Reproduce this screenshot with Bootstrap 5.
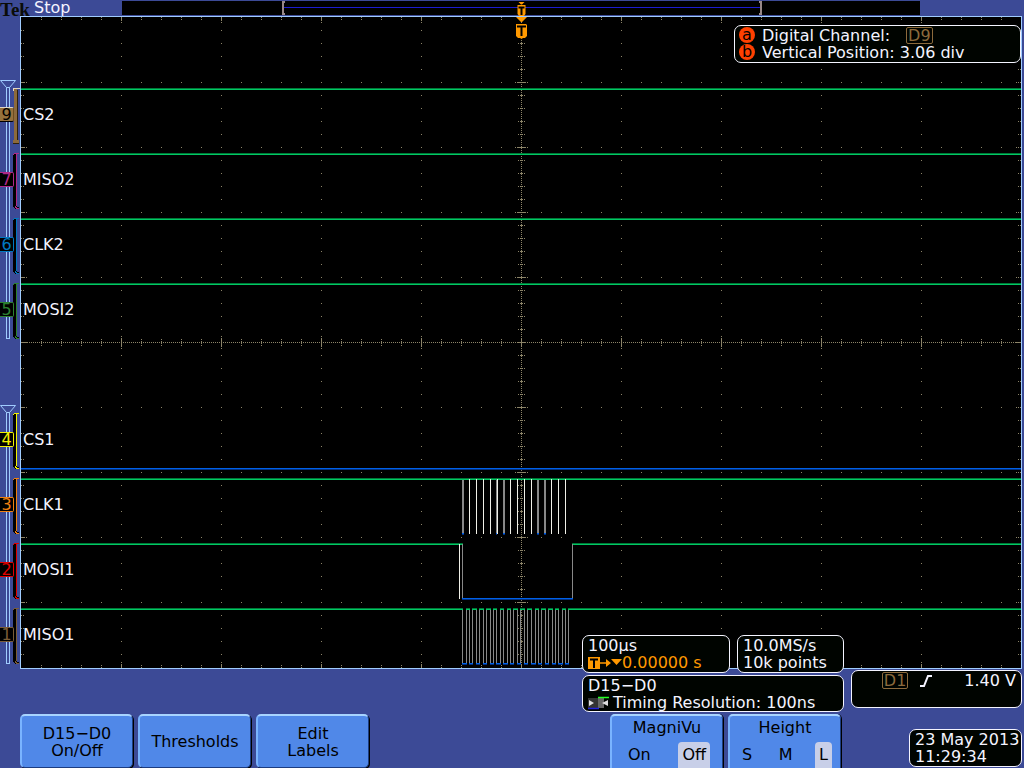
<!DOCTYPE html>
<html lang="en">
<head>
<meta charset="utf-8">
<meta name="viewport" content="width=device-width, initial-scale=1">
<title>Tek Oscilloscope</title>
<link href="https://cdn.jsdelivr.net/npm/bootstrap@5.3.0/dist/css/bootstrap.min.css" rel="stylesheet">
<style>
body{background:#3c4a96;color:#f4f4ff;font:16px/17px "DejaVu Sans",sans-serif;min-height:100vh;overflow-x:hidden}
.topbar{height:16px}
.brand{width:122px;line-height:16px;white-space:nowrap}
.tek{font:700 19px/20px "Liberation Serif",serif;color:#0a0c08;width:34px}
.overview{min-width:0}
.top-end{width:104px}
.scope{position:relative}
.rail{width:20px;height:653px;flex:none}
.plot{background:#000;border:1px solid #a0ccff;margin-right:2px}
.traces{position:absolute;inset:0;width:100%;height:100%}
.channels{position:absolute;inset:1px auto auto 0;grid-template-rows:repeat(10,65px);margin:0;padding:0;list-style:none}
.channel{gap:9px}
.tag{width:14px;height:15px;border:1px solid;border-left:0;border-radius:0 2px 2px 0;background:#000;line-height:14px;text-align:center}
.tag.solid{background:#96713c;color:#000!important;border-color:#e0d8c8 #6b4c20 #000}
.trig{position:absolute;left:50%;top:-15px;width:13px;height:40px;margin-left:-6px;z-index:1}
.readout{background:#000400;border:1px solid #f4f4ff;border-radius:7px;padding:1px 5px;white-space:nowrap;line-height:17px}
.cursor-box{position:absolute;top:8px;right:0;width:287px;height:38px;padding:1px 4px}
.knob{width:16px;height:16px;border-radius:50%;background:#ff4000;color:#000;line-height:15px;text-align:center;margin-right:7px}
.src{border:1px solid #8c6a3c;border-radius:2px;color:#8c6a3c;line-height:15px;padding:0 1px}
.amber{color:#ff9900}
footer{margin-top:-34px;position:relative;z-index:2;padding:0 2px 0 20px}
.horiz{width:262px;display:grid;grid-template-columns:148px 107px;gap:2px 7px}
.horiz .wide{grid-column:1/3;height:37px}
.short{height:38px}
.trigger-box{width:171px;margin:35px 0 0 7px}
.edge{margin:0 32px 0 12px}
.keys{margin-top:2px;gap:5px}
.softkey{width:113px;height:54px;border:1px solid;border-color:#a8d4ff #1c3c80 #1c3c80 #7ab4ff;border-width:2px 1px 1px 2px;border-radius:5px;background:#5088e8;color:#000;padding:0;box-shadow:1px 1px 0 #000;line-height:17px}
.panel{padding:3px 0 0;border-bottom:0;border-radius:5px 5px 0 0;box-shadow:1px 0 0 #000}
.panel legend{font-size:16px;line-height:17px;margin:0 0 6px;float:left;width:100%;text-align:center}
.choices{clear:both}
.opt{border-radius:4px 4px 0 0;padding:4px 4px 5px;cursor:pointer}
.btn-check:checked+.opt{background:#c8cfe8}
.date-box{width:113px;margin:15px 0 0 63px}
</style>
</head>
<body class="d-flex flex-column">
<header class="topbar d-flex">
  <div class="brand d-flex"><span class="tek">Tek</span><span>Stop</span></div>
  <svg class="overview flex-grow-1" height="16" viewBox="0 0 798 16" preserveAspectRatio="none" shape-rendering="crispEdges">
    <rect y="1" width="798" height="14"/><path d="M161 7.500H639" stroke="#1c1cd0"/>
    <path d="M163 2h-2v12h2M637 2h2v12h-2" fill="none" stroke="#988888" stroke-width="2"/>
  </svg>
  <div class="top-end"></div>
</header>
<main class="scope d-flex">
  <svg class="rail" viewBox="0 16 20 653" shape-rendering="crispEdges" fill="none" id="rail">
    <path d="M6.500 87v251h3V87M6.500 412v251h3V412" stroke="#a0ccff"/>
    <path d="M.5 80.500h15l-6 7h-3zM.5 405.500h15l-6 7h-3z" stroke="#a0ccff" fill="#3c4a96" shape-rendering="auto"/>
  </svg>
  <div class="plot flex-grow-1 position-relative">
    <svg class="traces" viewBox="21 17 1000 651" preserveAspectRatio="none" shape-rendering="crispEdges" fill="none" id="traces"></svg>
    <svg class="trig" viewBox="515 2 13 40">
      <g fill="#ff9900"><path d="M518 1.500h7l-3 3h-1zM517.500 5h8v9l-1.500 2h-5l-1.500-2zM516 17h11l-5 5h-1zM516 24h10l1 1v11l-2 2h-2l-1.500 1-1.500-1h-2l-2-2V25z"/></g>
      <path d="M518.500 7.500h6M521.500 7v8M517 26.500h9M521.500 26v10" stroke="#000" stroke-width="2" fill="none"/>
    </svg>
    <section class="readout cursor-box">
      <div class="d-flex"><span class="knob">a</span><span>Digital Channel:</span><span class="src ms-3">D9</span></div>
      <div class="d-flex"><span class="knob">b</span><span>Vertical Position: 3.06 div</span></div>
    </section>
  </div>
  <ul class="channels d-grid" id="channels"></ul>
</main>
<footer>
  <div class="d-flex justify-content-end">
    <div class="horiz">
      <div class="readout short">100µs
        <div class="amber d-flex align-items-center"><svg width="34" height="17" viewBox="0 0 34 17"><path fill="#ff9900" d="M0 3h12v12H0zM18 5l5 4-5 4zM23 5h11l-5.500 6z"/><path d="M12 9h9" stroke="#ff9900" stroke-width="1.500"/><path d="M2 5.500h8M6 5v9" stroke="#000" stroke-width="2"/></svg><span>0.00000 s</span></div>
      </div>
      <div class="readout short">10.0MS/s<br>10k points</div>
      <div class="readout wide">D15−D0
        <div class="d-flex"><svg width="21" height="17" viewBox="0 0 21 17"><path fill="#333" d="M0 4h10v10H0z"/><path fill="#666" d="M10 4h6v10h-6z"/><path d="M0 14.500h11" stroke="#22d" stroke-width="1.500"/><path d="M10 3.500h11" stroke="#2f2" stroke-width="1.500"/><path fill="#ddd" d="M1 6l5 3-5 3zM20 6l-6 3 6 3z"/></svg><span class="ms-1">Timing Resolution: 100ns</span></div>
      </div>
    </div>
    <div class="readout trigger-box short d-flex align-items-start justify-content-end">
      <span class="src">D1</span>
      <svg class="edge" width="12" height="17" viewBox="0 0 12 17"><path d="M0 14h4l4-10h4" fill="none" stroke="#f4f4ff" stroke-width="2"/></svg>
      <span>1.40 V</span>
    </div>
  </div>
  <div class="keys d-flex align-items-start">
    <button type="button" class="softkey">D15−D0<br>On/Off</button>
    <button type="button" class="softkey">Thresholds</button>
    <button type="button" class="softkey">Edit<br>Labels</button>
    <fieldset class="softkey panel ms-auto">
      <legend>MagniVu</legend>
      <div class="choices d-flex justify-content-between px-2 mx-1">
        <div><input class="btn-check" type="radio" name="magnivu" id="mv-on"><label class="opt d-block" for="mv-on">On</label></div>
        <div><input class="btn-check" type="radio" name="magnivu" id="mv-off" checked><label class="opt d-block" for="mv-off">Off</label></div>
      </div>
    </fieldset>
    <fieldset class="softkey panel">
      <legend>Height</legend>
      <div class="choices d-flex justify-content-between px-2">
        <div><input class="btn-check" type="radio" name="height" id="h-s"><label class="opt d-block" for="h-s">S</label></div>
        <div><input class="btn-check" type="radio" name="height" id="h-m"><label class="opt d-block" for="h-m">M</label></div>
        <div><input class="btn-check" type="radio" name="height" id="h-l" checked><label class="opt d-block" for="h-l">L</label></div>
      </div>
    </fieldset>
    <div class="readout date-box short">23 May 2013<br>11:29:34</div>
  </div>
</footer>
<script>
// Channel list, one entry per 65px division; null leaves the division empty.
const channels = [null,
  ['9','CS2','#8c6a3c'],['7','MISO2','#b02888'],['6','CLK2','#0078c0'],['5','MOSI2','#2c8030'],null,
  ['4','CS1','#f0f000'],['3','CLK1','#f08010'],['2','MOSI1','#e00000'],['1','MISO1','#7a5c38']];
const rail = [], list = [];
channels.forEach((c, i) => {
  if (!c) { list.push('<li></li>'); return; }
  const y = 23 + i * 65, solid = c[0] === '9';
  if (solid) {
    rail.push(`<path fill="${c[2]}" d="M13 ${y}h4v52h2v3h-6v-3h1V${y + 3}h-1z"/>` +
      `<path stroke="#302008" d="M17.500 ${y + 2}v50M13 ${y + 55.5}h6"/><path stroke="#e0d8c8" d="M13.500 ${y + 3}v-2l2-.5h4"/>`);
  } else {
    rail.push(`<path fill="#000" d="M13 ${y + 1}h4v53h2v2h-4l-2-2z"/>` +
      `<path stroke="${c[2]}" d="M13 ${y + 1.5}l2-1h4M16.500 ${y + 1}v52M15 ${y + 53.5}l2 2h2"/>`);
  }
  list.push(`<li class="channel d-flex align-items-center"><span class="tag${solid ? ' solid' : ''}" style="color:${c[2]}">${c[0]}</span><span>${c[1]}</span></li>`);
});
document.getElementById('rail').innerHTML += rail.join('');
document.getElementById('channels').innerHTML = list.join('');

// Graticule dots
let dots = '';
const dot = (x, y) => { dots += `M${x} ${y + .5}h1`; };
for (let y = 82; y < 667; y += 65) {
  for (let x = 41; x < 1021; x += 20) dot(x, y);
  [22, 24, 26, 1016, 1018, 1020, 515, 517, 519, 523, 525, 527].forEach(x => dot(x, y));
}
for (let x = 121; x < 1021; x += 100) {
  for (let y = 30; y < 667; y += 13) dot(x, y);
  [18, 20, 22, 662, 664, 666, 336, 338, 340, 344, 346, 348].forEach(y => dot(x, y));
}
for (let x = 41; x < 1021; x += 20) [17, 19, 665, 667, 339, 341, 343, 345].forEach(y => dot(x, y));
for (let y = 30; y < 667; y += 13) [21, 23, 1018, 1020, 518, 520, 522, 524].forEach(x => dot(x, y));
for (let x = 21; x < 1021; x += 2) dot(x, 342);
for (let y = 40; y < 667; y += 2) dot(521, y);

// Digital traces
const out = [];
const line = (d, c, w = 1) => out.push(`<path d="${d}" stroke="${c}" stroke-width="${w}"/>`);
const high = (a, b, y) => { line(`M${a} ${y - .5}H${b}`, '#007838'); line(`M${a} ${y + .5}H${b}`, '#00c864'); };
const low = (a, b, y) => { line(`M${a} ${y + .5}H${b}`, '#0060e8'); line(`M${a} ${y + 1.5}H${b}`, '#003080'); };
const wall = (x, a, b, c) => line(`M${x + .5} ${a}V${b}`, c);
[89, 154, 219, 284, 479].forEach(y => high(21, 1021, y));
low(21, 1021, 468);
[469, 476, 483, 490, 497, 510, 517, 524, 531, 551, 558, 565].forEach(x => wall(x, 479, 534, '#f0f0e8'));
[462, 463, 496, 503, 504, 537, 538, 544, 545].forEach(x => { wall(x, 480, 533, '#888'); low(x, x + 1, 533); });
high(21, 463, 544); high(572, 1021, 544); low(462, 573, 598);
wall(459, 544, 599, '#f0f0e8'); wall(462, 544, 598, '#888'); wall(572, 544, 598, '#888');
const fall = [462,469,476,483,490,496,503,510,517,524,531,538,545,552,558,565];
const rise = [466,472,479,486,493,500,507,513,520,527,535,541,548,555,562,568];
high(21, 463, 609);
fall.forEach((x, i) => {
  wall(x, 610, 663, '#888'); wall(rise[i], 610, 663, '#888');
  low(x, rise[i] + 1, 663);
  high(rise[i], i < 15 ? fall[i + 1] + 1 : 1021, 609);
});
document.getElementById('traces').innerHTML = `<path d="${dots}" stroke="#8c8468"/>` + out.join('');
</script>
<script src="https://cdn.jsdelivr.net/npm/bootstrap@5.3.0/dist/js/bootstrap.bundle.min.js"></script>
</body>
</html>
